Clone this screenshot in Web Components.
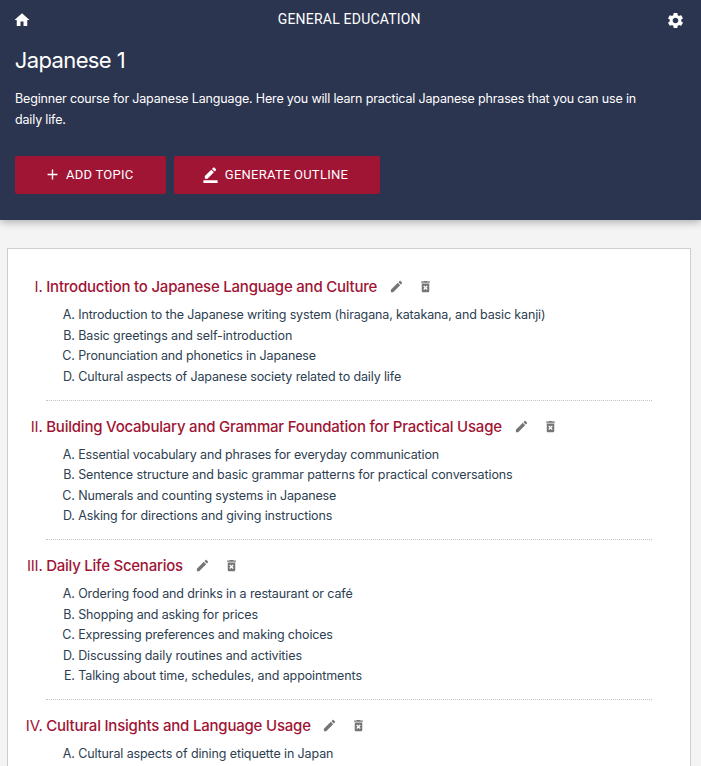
<!DOCTYPE html>
<html lang="en">
<head>
<meta charset="utf-8">
<title>Japanese 1</title>
<style>
html,body{margin:0;background:#f4f4f4}
body{height:766px;overflow:hidden;font-family:Inter,"Liberation Sans",sans-serif;color:#2c3e50}
</style>
</head>
<body>
<course-page></course-page>
<script>
const ICONS = {
  home: 'M10 20v-6h4v6h5v-8h3L12 3 2 12h3v8z',
  settings: 'M19.14 12.94c.04-.3.06-.61.06-.94 0-.32-.02-.64-.07-.94l2.03-1.58c.18-.14.23-.41.12-.61l-1.92-3.32c-.12-.22-.37-.29-.59-.22l-2.39.96c-.5-.38-1.03-.7-1.62-.94l-.36-2.54c-.04-.24-.24-.41-.48-.41h-3.84c-.24 0-.43.17-.47.41l-.36 2.54c-.59.24-1.13.57-1.62.94l-2.39-.96c-.22-.08-.47 0-.59.22L2.74 8.87c-.12.21-.08.47.12.61l2.03 1.58c-.05.3-.09.63-.09.94s.02.64.07.94l-2.03 1.58c-.18.14-.23.41-.12.61l1.92 3.32c.12.22.37.29.59.22l2.39-.96c.5.38 1.03.7 1.62.94l.36 2.54c.05.24.24.41.48.41h3.84c.24 0 .44-.17.47-.41l.36-2.54c.59-.24 1.13-.56 1.62-.94l2.39.96c.22.08.47 0 .59-.22l1.92-3.32c.12-.22.07-.47-.12-.61l-2.01-1.58zM12 15.6c-1.98 0-3.6-1.62-3.6-3.6s1.62-3.6 3.6-3.6 3.6 1.62 3.6 3.6-1.62 3.6-3.6 3.6z',
  add: 'M19 13h-6v6h-2v-6H5v-2h6V5h2v6h6z',
  outline: 'M2 20h20v4H2zM13.06 5.19l3.75 3.75L7.75 18H4v-3.75zM17.88 7.87l-3.75-3.75 1.83-1.83c.39-.39 1.02-.39 1.41 0l2.34 2.34c.39.39.39 1.02 0 1.41z',
  edit: 'M3 17.25V21h3.75L17.81 9.94l-3.75-3.75zM20.71 7.04c.39-.39.39-1.02 0-1.41l-2.34-2.34c-.39-.39-1.02-.39-1.41 0l-1.83 1.83 3.75 3.75z',
  remove: 'M6 19c0 1.1.9 2 2 2h8c1.1 0 2-.9 2-2V7H6zm2.46-7.12 1.41-1.41L12 12.59l2.12-2.12 1.41 1.41L13.41 14l2.12 2.12-1.41 1.41L12 15.41l-2.12 2.12-1.41-1.41L10.59 14zM15.5 4l-1-1h-5l-1 1H5v2h14V4z'
};

/* Each topic: [numeral, title, tracking, [[item, tracking], ...]] */
const TOPICS = [
  ['I.', 'Introduction to Japanese Language and Culture', -.218, [
    ['Introduction to the Japanese writing system (hiragana, katakana, and basic kanji)', -.14],
    ['Basic greetings and self-introduction', -.1],
    ['Pronunciation and phonetics in Japanese', -.145],
    ['Cultural aspects of Japanese society related to daily life', -.132]]],
  ['II.', 'Building Vocabulary and Grammar Foundation for Practical Usage', -.218, [
    ['Essential vocabulary and phrases for everyday communication', -.155],
    ['Sentence structure and basic grammar patterns for practical conversations', -.114],
    ['Numerals and counting systems in Japanese', -.16],
    ['Asking for directions and giving instructions', -.115]]],
  ['III.', 'Daily Life Scenarios', -.25, [
    ['Ordering food and drinks in a restaurant or café', -.14],
    ['Shopping and asking for prices', -.145],
    ['Expressing preferences and making choices', -.165],
    ['Discussing daily routines and activities', -.12],
    ['Talking about time, schedules, and appointments', -.11]]],
  ['IV.', 'Cultural Insights and Language Usage', -.21, [
    ['Cultural aspects of dining etiquette in Japan', -.11]]]
];

const define = (name, html) => customElements.define(name, class extends HTMLElement {
  constructor() { super(); this.attachShadow({mode: 'open'}); }
  connectedCallback() {
    this.shadowRoot.innerHTML = typeof html === 'function' ? html(this) : html;
  }
});

define('app-icon', el => `<style>
  :host{display:block;flex:none;width:var(--size,15px);height:var(--size,15px)}
  svg{display:block;width:100%;height:100%;fill:currentColor}
</style><svg viewBox="0 0 24 24" aria-hidden="true"><path d="${ICONS[el.getAttribute('name')]}"/></svg>`);

define('action-button', `<style>
  :host{display:block;flex:none}
  button{box-sizing:border-box;width:100%;height:38px;border:0;border-radius:2px;margin:0;padding:0 0 0 var(--inset);
    display:flex;align-items:center;gap:var(--gap);background:#a01434;color:#fff;
    font:400 13px/38px Roboto,sans-serif;letter-spacing:var(--track);white-space:nowrap}
</style><button><slot name="icon"></slot><slot></slot></button>`);

define('course-header', `<style>
  :host{display:block;box-sizing:border-box;height:220px;padding:10px 16px 0 13.5px;background:#2c3550;color:#fff;
    box-shadow:0 2px 8px rgba(0,0,0,.3)}
  nav{display:grid;grid-template-columns:20px 1fr 20px;align-items:center;height:20px}
  nav span{text-align:center;font:400 14px/20px Roboto,sans-serif;letter-spacing:.21px;padding-bottom:2px;margin-top:-1px}
  nav app-icon{--size:18px;margin:-2px 0 0 -.5px}
  nav app-icon:last-child{--size:19px;justify-self:end;margin-top:-1px}
  h1{margin:14px 0 0 1.2px;font-size:22px;line-height:32px;font-weight:400;letter-spacing:-.6px}
  p{margin:13px 0 0 1.5px;font-size:12.5px;line-height:20.5px;letter-spacing:-.164px;white-space:nowrap}
  .actions{display:flex;gap:8px;margin:26px 0 0 1.5px}
  action-button:first-child{width:151px;--inset:28.5px;--gap:5.5px;--track:.25px}
  action-button:last-child{width:206px;--inset:27.5px;--gap:6.3px;--track:.25px}
  .actions app-icon{--size:17px;margin-top:-.6px}
</style>
<nav><app-icon name="home"></app-icon><span>GENERAL EDUCATION</span><app-icon name="settings"></app-icon></nav>
<h1>Japanese 1</h1>
<p>Beginner course for Japanese Language. Here you will learn practical Japanese phrases that you can use in<br>daily life.</p>
<div class="actions">
  <action-button><app-icon slot="icon" name="add"></app-icon>ADD TOPIC</action-button>
  <action-button><app-icon slot="icon" name="outline"></app-icon>GENERATE OUTLINE</action-button>
</div>`);

define('topic-section', el => {
  const [num, title, track, items] = TOPICS[el.getAttribute('index')];
  return `<style>
  :host{display:block;margin:0 38px;padding:14px 0 12.6px;border-bottom:1px dotted #c4c4c4}
  header{display:flex;align-items:center;height:24.3px;margin:0 0 5.7px -38px;color:#a01434;font-size:15px;line-height:24.3px;white-space:nowrap}
  .num{width:34.5px;text-align:right;margin-right:4px;letter-spacing:-.2px}
  h2{margin:0 0 0 -.3px;font:inherit;font-weight:500}
  app-icon{color:#757575;margin:-1.4px 0 0 11.7px}
  app-icon + app-icon{margin-left:14px}
  ol{margin:0;padding:0;list-style:none;font-size:12.5px;line-height:20.48px}
  li{display:flex;height:20.48px;white-space:nowrap}
  li b{font-weight:400;width:28.8px;margin-right:3.4px;text-align:right;letter-spacing:-.1px}
</style>
<header><span class="num">${num}</span><h2 style="letter-spacing:${track}px">${title}</h2><app-icon name="edit"></app-icon><app-icon name="remove"></app-icon></header>
<ol>${items.map(([t, ls], i) => `<li><b>${'ABCDE'[i]}.</b><span style="letter-spacing:${ls}px">${t}</span></li>`).join('')}</ol>`;
});

define('outline-card', `<style>
  :host{display:block;box-sizing:border-box;margin:28px 10px 0 7px;height:620px;padding-top:12.3px;background:#fff;border:1px solid #d0cdcb}
</style><slot></slot>`);

define('course-page', `<style>:host{display:block;height:766px;overflow:hidden}</style>
<course-header></course-header>
<outline-card>${TOPICS.map((_, i) => `<topic-section index="${i}"></topic-section>`).join('')}</outline-card>`);
</script>
</body>
</html>
